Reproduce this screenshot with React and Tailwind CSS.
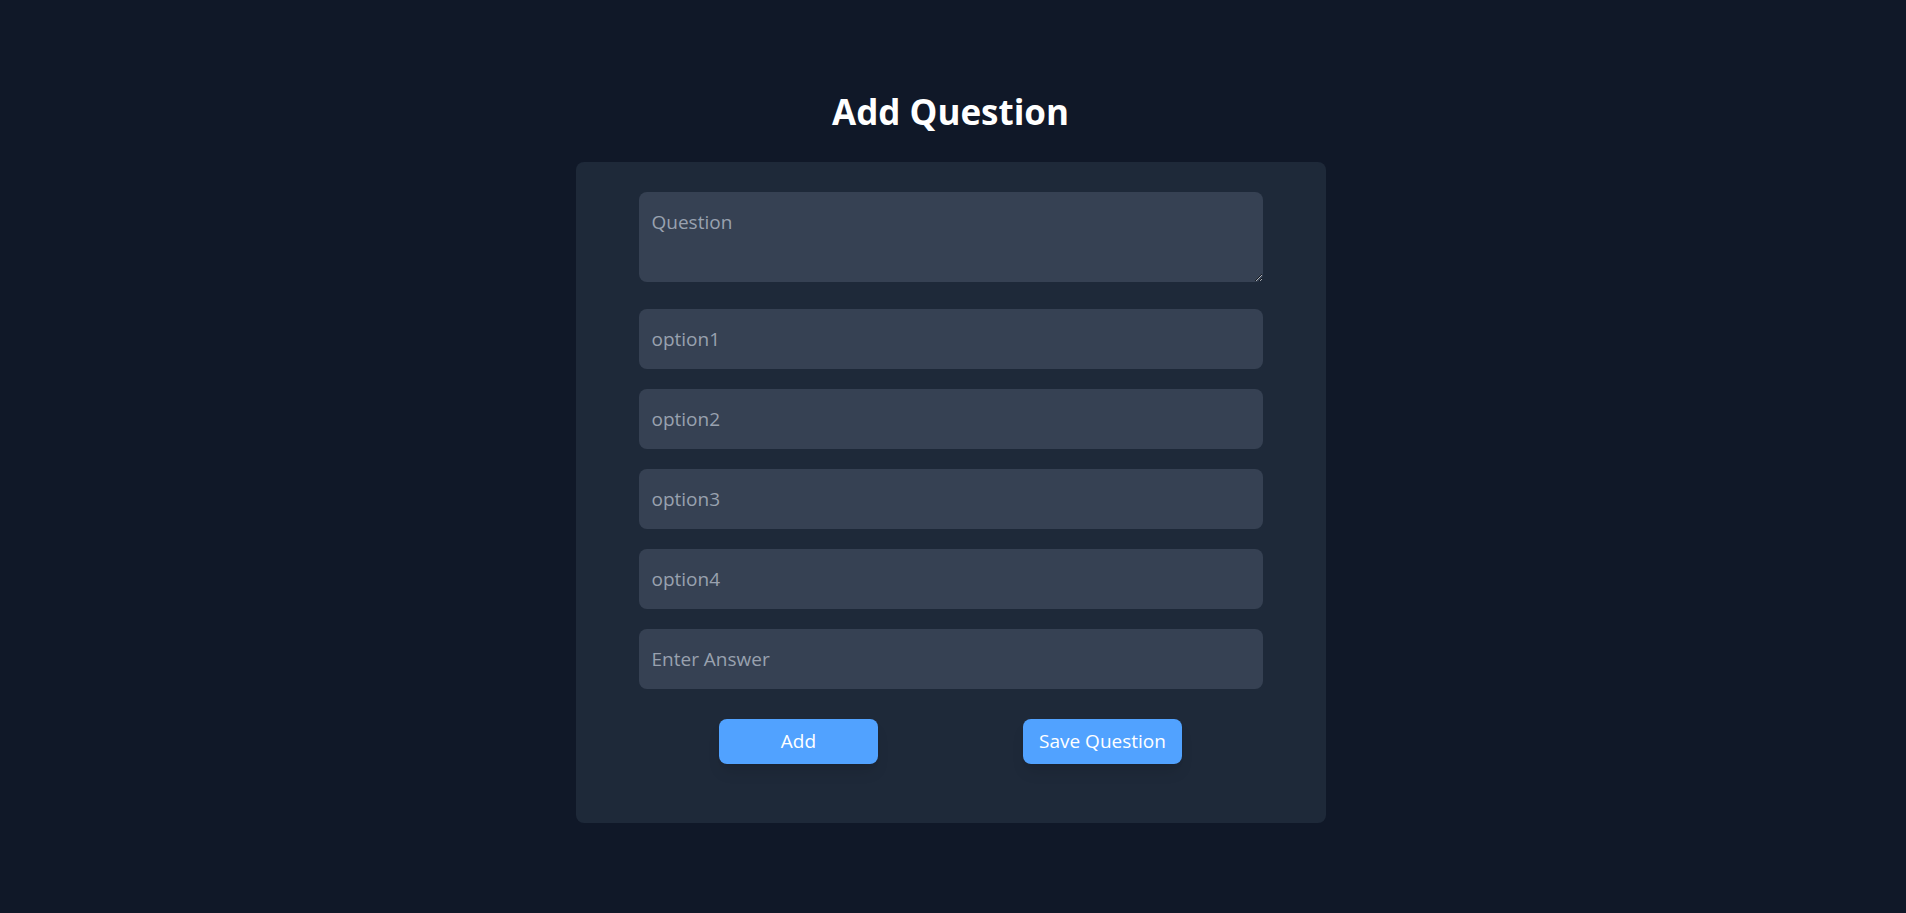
import { useState } from 'react'

function App() {
  const [question, setQuestion] = useState('')
  const [options, setOptions] = useState(['', '', '', ''])
  const [answer, setAnswer] = useState('')

  const setOption = (i, v) => {
    const next = [...options]
    next[i] = v
    setOptions(next)
  }

  const field =
    'block w-full h-[60px] pl-[13px] pr-4 text-[19px] leading-7 rounded-lg bg-gray-700 text-white placeholder-gray-400 outline-none'

  return (
    <div
      className="min-h-screen bg-gray-900 flex flex-col items-center pt-[92px] pr-[5px]"
      style={{ fontFamily: '"Open Sans", "Noto Sans", sans-serif' }}
    >
      <h1 className="text-[35px] leading-10 font-bold text-white mb-[30px]">Add Question</h1>

      <div className="w-[750px] bg-gray-800 rounded-lg px-[63px] pt-[30px] pb-[59px]">
        <textarea
          className="block w-full h-[90px] py-4 pl-[13px] pr-4 text-[19px] leading-7 rounded-lg bg-gray-700 text-white placeholder-gray-400 outline-none mb-[27px]"
          placeholder="Question"
          value={question}
          onChange={(e) => setQuestion(e.target.value)}
        />

        <div className="flex flex-col gap-5">
          {options.map((opt, i) => (
            <input
              key={i}
              className={field}
              placeholder={'option' + (i + 1)}
              value={opt}
              onChange={(e) => setOption(i, e.target.value)}
            />
          ))}
          <input
            className={field}
            placeholder="Enter Answer"
            value={answer}
            onChange={(e) => setAnswer(e.target.value)}
          />
        </div>

        <div className="flex justify-center gap-[145px] mt-[30px]">
          <button className="w-[159px] h-[45px] rounded-lg bg-blue-400 text-white text-[19px] shadow-lg">
            Add
          </button>
          <button className="w-[159px] h-[45px] rounded-lg bg-blue-400 text-white text-[19px] shadow-lg">
            Save Question
          </button>
        </div>
      </div>
    </div>
  )
}

export default App
